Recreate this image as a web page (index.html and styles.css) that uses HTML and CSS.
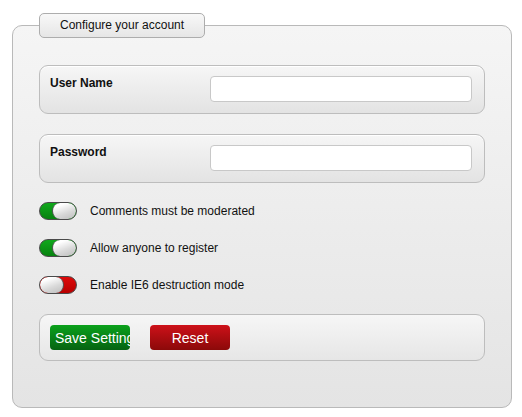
FILE: index.html
```html
<!DOCTYPE html>
<html lang="en">
<head>
<meta charset="utf-8">
<title>Configure your account</title>
<link rel="stylesheet" href="styles.css">
</head>
<body>
<div class="page">
  <form class="settings">
    <fieldset class="panel">
      <legend class="panel-title">Configure your account</legend>
      <div class="field">
        <label class="field-label" for="user">User Name</label>
        <input class="field-input" id="user" type="text">
      </div>
      <div class="field field-next">
        <label class="field-label" for="pass">Password</label>
        <input class="field-input" id="pass" type="password">
      </div>
      <div class="options">
        <div class="option">
          <span class="toggle toggle-on"><span class="knob"></span></span>
          <span class="option-text">Comments must be moderated</span>
        </div>
        <div class="option">
          <span class="toggle toggle-on"><span class="knob"></span></span>
          <span class="option-text">Allow anyone to register</span>
        </div>
        <div class="option">
          <span class="toggle toggle-off"><span class="knob"></span></span>
          <span class="option-text">Enable IE6 destruction mode</span>
        </div>
      </div>
      <div class="actions">
        <button type="button" class="btn btn-save">Save Setting</button>
        <button type="button" class="btn btn-reset">Reset</button>
      </div>
    </fieldset>
  </form>
</div>
</body>
</html>
```
FILE: styles.css
```css
html, body {
  margin: 0;
  padding: 0;
  background: #ffffff;
}
body {
  font-family: "Liberation Sans", Arial, sans-serif;
  font-size: 12px;
  color: #111;
}
.page {
  padding: 13px 0 0 12px;
}
.settings {
  margin: 0;
}
.panel {
  box-sizing: border-box;
  width: 500px;
  margin: 0;
  padding: 27px 26px 46px 26px;
  border: 1px solid #b9b9b9;
  border-radius: 10px;
  background: linear-gradient(#f5f5f5, #e4e4e4);
  min-inline-size: 0;
}
.panel-title {
  box-sizing: border-box;
  height: 25px;
  padding: 0 20px;
  line-height: 23px;
  font-size: 12px;
  color: #111;
  border: 1px solid #adadad;
  border-radius: 5px;
  background: linear-gradient(#f8f8f8, #e6e6e6);
}
.field {
  box-sizing: border-box;
  height: 49px;
  display: flex;
  align-items: flex-start;
  padding: 10px 12px 10px 10px;
  border: 1px solid #bdbdbd;
  border-radius: 9px;
  background: linear-gradient(#f6f6f6, #e3e3e3);
  box-shadow: inset 0 1px 0 #ffffff;
}
.field-next {
  margin-top: 20px;
}
.field-label {
  width: 160px;
  font-weight: bold;
  font-size: 12px;
  line-height: 14px;
  margin-top: 0;
}
.field-input {
  box-sizing: border-box;
  margin: 0 0 0 auto;
  width: 262px;
  height: 26px;
  padding: 0 6px;
  border: 1px solid #c8c8c8;
  border-radius: 4px;
  background: #ffffff;
  font: 12px "Liberation Sans", Arial, sans-serif;
  outline: none;
}
.options {
  display: flex;
  flex-direction: column;
  gap: 19px;
  margin: 19px 0 20px;
}
.option {
  display: flex;
  align-items: center;
  gap: 13px;
  height: 18px;
}
.option-text {
  font-size: 12px;
  line-height: 14px;
}
.toggle {
  box-sizing: border-box;
  display: flex;
  width: 38px;
  height: 18px;
  border: 1px solid #4a4a4a;
  border-radius: 9px;
  overflow: hidden;
  flex: none;
}
.toggle-on {
  background: linear-gradient(#10a81c, #07820f);
}
.toggle-off {
  background: linear-gradient(#dd0a0a, #b80000);
}
.knob {
  box-sizing: border-box;
  width: 24px;
  height: 16px;
  border-radius: 8px;
  background: linear-gradient(160deg, #ffffff 20%, #d9d9d9 60%, #bdbdbd);
}
.toggle-on .knob {
  margin-left: auto;
  border-left: 1px solid #555;
}
.toggle-off .knob {
  border-right: 1px solid #555;
}
.actions {
  box-sizing: border-box;
  height: 47px;
  display: flex;
  align-items: center;
  gap: 20px;
  padding: 0 10px;
  border: 1px solid #bdbdbd;
  border-radius: 9px;
  background: linear-gradient(#f6f6f6, #e6e6e6);
}
.btn {
  box-sizing: border-box;
  width: 80px;
  height: 25px;
  margin: 0;
  padding: 0 5px;
  border: none;
  border-radius: 4px;
  color: #ffffff;
  font: 14px "Liberation Sans", Arial, sans-serif;
  white-space: nowrap;
  overflow: hidden;
  cursor: pointer;
}
.btn-save {
  text-align: left;
  background: linear-gradient(#0ba11b, #066312);
}
.btn-reset {
  text-align: center;
  background: linear-gradient(#cd1119, #8b0909);
}
```
